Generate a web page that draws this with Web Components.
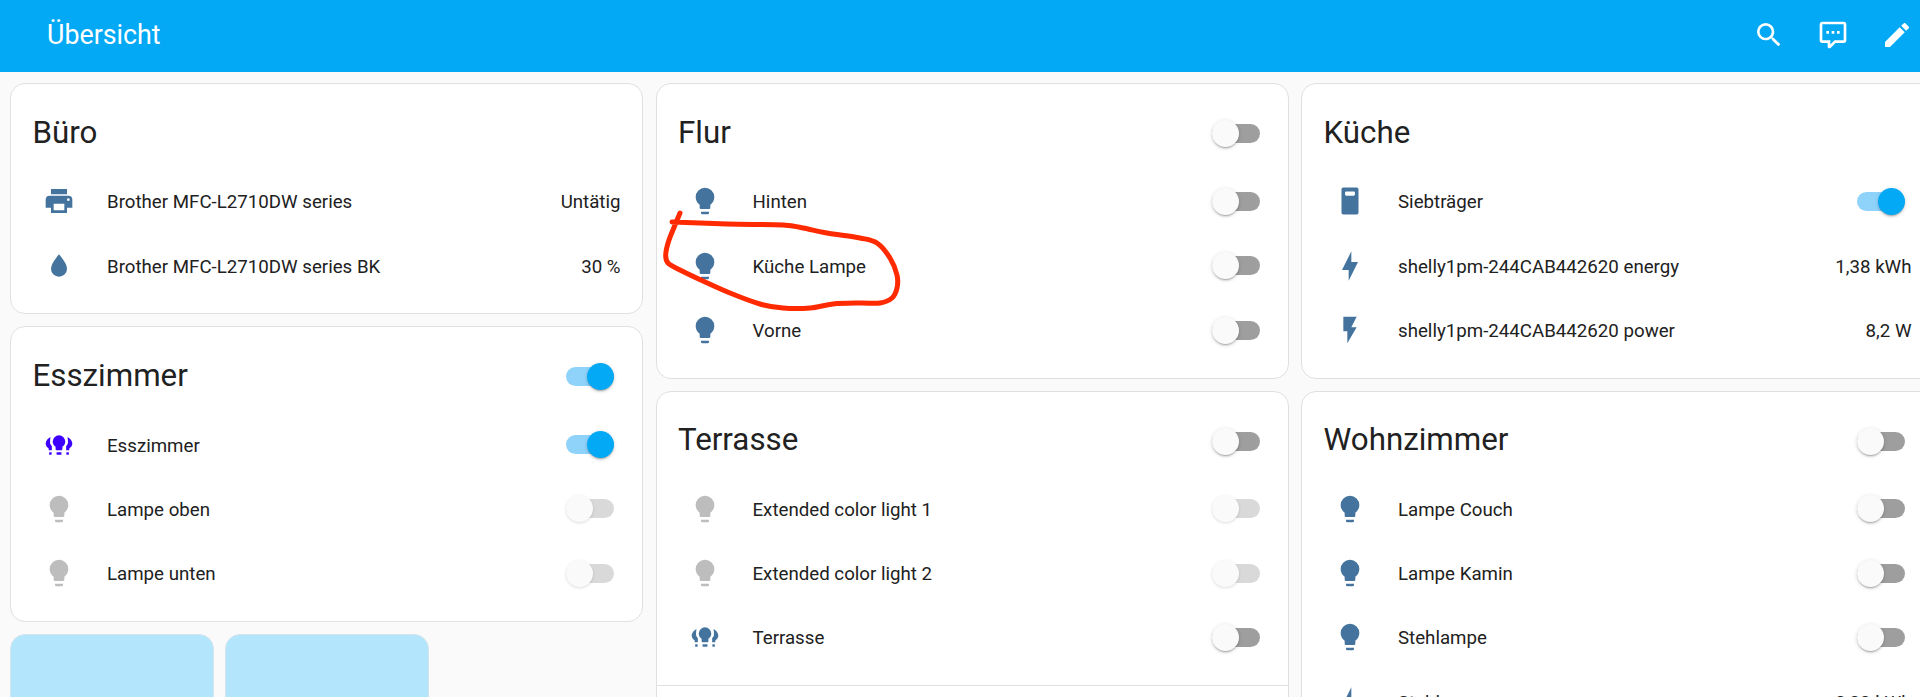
<!DOCTYPE html>
<html lang="de">
<head>
<meta charset="utf-8">
<title>Übersicht</title>
<style>
    html, body { margin: 0; height: 697px; overflow: hidden; background: #fafafa; }
    body { font-family: Roboto, "Liberation Sans", sans-serif; color: #212121; }
</style>
</head>
<body>
<ha-page>
    <ha-toolbar title="Übersicht"></ha-toolbar>
    <ha-column>
        <ha-card title="Büro">
            <ha-row icon="printer" name="Brother MFC-L2710DW series" value="Untätig"></ha-row>
            <ha-row icon="water" name="Brother MFC-L2710DW series BK" value="30 %"></ha-row>
        </ha-card>
        <ha-card title="Esszimmer" toggle="on">
            <ha-row icon="group" color="#3d00ff" name="Esszimmer" toggle="on"></ha-row>
            <ha-row icon="bulb" color="#bdbdbd" name="Lampe oben" toggle="disabled"></ha-row>
            <ha-row icon="bulb" color="#bdbdbd" name="Lampe unten" toggle="disabled"></ha-row>
        </ha-card>
        <ha-tiles>
            <ha-tile></ha-tile>
            <ha-tile></ha-tile>
        </ha-tiles>
    </ha-column>
    <ha-column>
        <ha-card title="Flur" toggle="off">
            <ha-row icon="bulb" name="Hinten" toggle="off"></ha-row>
            <ha-row icon="bulb" name="Küche Lampe" toggle="off"></ha-row>
            <ha-row icon="bulb" name="Vorne" toggle="off"></ha-row>
        </ha-card>
        <ha-card title="Terrasse" toggle="off" footer>
            <ha-row icon="bulb" color="#bdbdbd" name="Extended color light 1" toggle="disabled"></ha-row>
            <ha-row icon="bulb" color="#bdbdbd" name="Extended color light 2" toggle="disabled"></ha-row>
            <ha-row icon="group" name="Terrasse" toggle="off"></ha-row>
        </ha-card>
    </ha-column>
    <ha-column>
        <ha-card title="Küche">
            <ha-row icon="socket" name="Siebträger" toggle="on"></ha-row>
            <ha-row icon="bolt" name="shelly1pm-244CAB442620 energy" value="1,38 kWh"></ha-row>
            <ha-row icon="flash" name="shelly1pm-244CAB442620 power" value="8,2 W"></ha-row>
        </ha-card>
        <ha-card title="Wohnzimmer" toggle="off">
            <ha-row icon="bulb" name="Lampe Couch" toggle="off"></ha-row>
            <ha-row icon="bulb" name="Lampe Kamin" toggle="off"></ha-row>
            <ha-row icon="bulb" name="Stehlampe" toggle="off"></ha-row>
            <ha-row icon="bolt" name="Stehlampe" value="0,00 kWh"></ha-row>
        </ha-card>
    </ha-column>
    <ink-mark></ink-mark>
</ha-page>
<script>
const ICONS = {
    search: 'M9.5,3A6.5,6.5 0 0,1 16,9.5C16,11.11 15.41,12.59 14.44,13.73L14.71,14H15.5L20.5,19L19,20.5L14,15.5V14.71L13.73,14.44C12.59,15.41 11.11,16 9.5,16A6.5,6.5 0 0,1 3,9.5A6.5,6.5 0 0,1 9.5,3M9.5,5C7,5 5,7 5,9.5C5,12 7,14 9.5,14C12,14 14,12 14,9.5C14,7 12,5 9.5,5Z',
    comment: 'M9,22A1,1 0 0,1 8,21V18H4A2,2 0 0,1 2,16V4C2,2.89 2.9,2 4,2H20A2,2 0 0,1 22,4V16A2,2 0 0,1 20,18H13.9L10.2,21.71C10,21.9 9.75,22 9.5,22V22H9M10,16V19.08L13.08,16H20V4H4V16H10M17,11H15V9H17V11M13,11H11V9H13V11M9,11H7V9H9V11Z',
    pencil: 'M20.71,7.04C21.1,6.65 21.1,6 20.71,5.63L18.37,3.29C18,2.9 17.35,2.9 16.96,3.29L15.12,5.12L18.87,8.87M3,17.25V21H6.75L17.81,9.93L14.06,6.18L3,17.25Z',
    bulb: 'M12,2A7,7 0 0,0 5,9C5,11.38 6.19,13.47 8,14.74V17A1,1 0 0,0 9,18H15A1,1 0 0,0 16,17V14.74C17.81,13.47 19,11.38 19,9A7,7 0 0,0 12,2M9,21A1,1 0 0,0 10,22H14A1,1 0 0,0 15,21V20H9V21Z',
    printer: 'M18,3H6V7H18M19,12A1,1 0 0,1 18,11A1,1 0 0,1 19,10A1,1 0 0,1 20,11A1,1 0 0,1 19,12M16,19H8V14H16M19,8H5A3,3 0 0,0 2,11V17H6V21H18V17H22V11A3,3 0 0,0 19,8Z',
    water: 'M12,20A6,6 0 0,1 6,14C6,10 12,3.25 12,3.25C12,3.25 18,10 18,14A6,6 0 0,1 12,20Z',
    flash: 'M7,2V13H10V22L17,10H13L17,2H7Z',
    bolt: 'M11 15H6L13 1V9H18L11 23V15Z',
    socket: 'M6 0H18A1.6 1.6 0 0 1 19.6 1.6V22.4A1.6 1.6 0 0 1 18 24H6A1.6 1.6 0 0 1 4.4 22.4V1.6A1.6 1.6 0 0 1 6 0ZM8.6 3.4A1 1 0 0 0 7.6 4.4V6.2A1 1 0 0 0 8.6 7.2H15.4A1 1 0 0 0 16.4 6.2V4.4A1 1 0 0 0 15.4 3.4Z',
    group: 'M12 4A5.2 5.2 0 0 0 6.8 9.2C6.8 11 7.7 12.5 9.2 13.5V15.5A.8.8 0 0 0 10 16.3H14A.8.8 0 0 0 14.8 15.5V13.5C16.3 12.5 17.2 11 17.2 9.2A5.2 5.2 0 0 0 12 4ZM10 18H14V20H10ZM5 5.3C2.8 6.4 1 8.5 1 10.8C1 12.6 2.2 14 3.5 14.9V16.4H6.1V12.8C5.1 12.1 4.6 11 4.6 9.8C4.6 8.2 4.7 6.9 5 5.3ZM3.9 18H5.9V20H3.9ZM19 5.3C21.2 6.4 23 8.5 23 10.8C23 12.6 21.8 14 20.5 14.9V16.4H17.9V12.8C18.9 12.1 19.4 11 19.4 9.8C19.4 8.2 19.3 6.9 19 5.3ZM18.1 18H20.1V20H18.1Z'
};

// the two hand made icons are drawn on a bigger grid than the 24 unit ones
const VIEW_BOXES = { group: '-1.2 -1.2 26.4 26.4', socket: '-2.3 -2.3 28.6 28.6' };

/** Small helper for the elements that only fill their shadow root once. */
class ShadowElement extends HTMLElement {
    constructor() {
        super();
        this.attachShadow({ mode: 'open' });
    }
}

class HaPage extends ShadowElement {
    connectedCallback() {
        this.shadowRoot.innerHTML = `
            <style>
                :host { display: grid; position: relative; width: 1944px; height: 697px; overflow: hidden;
                    grid-template-columns: repeat(3, 633px); grid-template-rows: 72px 1fr;
                    column-gap: 12.5px; padding: 0 10px; box-sizing: border-box; }
                ::slotted(ha-toolbar) { grid-column: 1 / -1; margin: 0 -10px; }
            </style>
            <slot></slot>
        `;
    }
}

class HaColumn extends ShadowElement {
    connectedCallback() {
        this.shadowRoot.innerHTML = `
            <style>
                :host { display: flex; flex-direction: column; gap: 12px; padding-top: 11.3px; min-width: 0; }
            </style>
            <slot></slot>
        `;
    }
}

class HaIcon extends ShadowElement {
    connectedCallback() {
        const name = this.getAttribute('name');
        this.shadowRoot.innerHTML = `
            <style>
                :host { display: block; width: 32px; height: 32px; flex: none; }
                svg { display: block; width: 100%; height: 100%; fill: currentColor; }
            </style>
            <svg viewBox="${VIEW_BOXES[name] || '0 0 24 24'}"><path d="${ICONS[name]}"/></svg>
        `;
    }
}

class HaToolbar extends ShadowElement {
    connectedCallback() {
        this.shadowRoot.innerHTML = `
            <style>
                :host { display: flex; align-items: center; height: 72px; padding: 0 15px 2px 47px;
                    box-sizing: border-box; background: #03a9f4; color: #fff; }
                h1 { flex: 1; margin: 0; font-size: 26.8px; font-weight: 400; }
                span { display: flex; justify-content: center; width: 64.2px; }
            </style>
            <h1>${this.getAttribute('title')}</h1>
            <span><ha-icon name="search"></ha-icon></span>
            <span><ha-icon name="comment"></ha-icon></span>
            <span><ha-icon name="pencil"></ha-icon></span>
        `;
    }
}

class HaToggle extends ShadowElement {
    connectedCallback() {
        this.shadowRoot.innerHTML = `
            <style>
                :host { display: flex; align-items: center; position: relative; width: 48px; height: 27px; flex: none; }
                .track { width: 100%; height: 19px; border-radius: 10px; background: #9e9e9e; }
                .thumb { position: absolute; top: 0; left: 0; width: 27px; height: 27px; border-radius: 50%;
                    background: #fafafa; box-shadow: 0 2px 2px -1px rgba(0,0,0,.3), 0 1px 4px rgba(0,0,0,.16); }
                :host([state=on]) .track { background: #8fd3fb; }
                :host([state=on]) .thumb { left: auto; right: 0; background: #03a9f4; }
                :host([state=disabled]) .track { background: #d9d9d9; }
                :host([state=disabled]) .thumb { box-shadow: 0 1px 3px rgba(0,0,0,.14); }
            </style>
            <div class="track"></div>
            <div class="thumb"></div>
        `;
    }
}

class HaRow extends ShadowElement {
    connectedCallback() {
        const value = this.getAttribute('value');
        const toggle = this.getAttribute('toggle');
        const color = this.getAttribute('color') || '#44739e';
        const end = toggle ? `<ha-toggle state="${toggle}"></ha-toggle>` : `<span class="value">${value}</span>`;
        this.shadowRoot.innerHTML = `
            <style>
                :host { display: flex; align-items: center; height: 64.3px; font-size: 18.7px; }
                :host([toggle]) { padding-right: 6.5px; }
                .icon { display: flex; justify-content: center; width: 49px; margin-left: 2px; color: ${color}; flex: none; }
                .name { flex: 1; margin-left: 23.5px; padding-top: 2px; white-space: nowrap; }
                .value { padding-top: 2px; white-space: nowrap; }
            </style>
            <div class="icon"><ha-icon name="${this.getAttribute('icon')}"></ha-icon></div>
            <div class="name">${this.getAttribute('name')}</div>
            ${end}
        `;
    }
}

class HaCard extends ShadowElement {
    connectedCallback() {
        const toggle = this.getAttribute('toggle');
        this.shadowRoot.innerHTML = `
            <style>
                :host { display: block; background: #fff; border: 1.5px solid #e0e0e0; border-radius: 15px;
                    box-sizing: border-box; flex: none; }
                header { display: flex; align-items: center; justify-content: space-between;
                    height: 85px; box-sizing: border-box; padding: 14px 28px 0 21.5px; }
                h2 { margin: 0; font-size: 31.3px; font-weight: 400; line-height: 1.2; position: relative; top: -1px; }
                .rows { padding: 0 21.5px 15.5px; }
                .footer { border-top: 1.5px solid #e0e0e0; height: 60px; }
                :host(:not([footer])) .footer { display: none; }
            </style>
            <header>
                <h2>${this.getAttribute('title')}</h2>
                ${toggle ? `<ha-toggle state="${toggle}"></ha-toggle>` : ''}
            </header>
            <div class="rows"><slot></slot></div>
            <div class="footer"></div>
        `;
    }
}

class HaTiles extends ShadowElement {
    connectedCallback() {
        this.shadowRoot.innerHTML = `
            <style>
                :host { display: flex; gap: 11.5px; }
            </style>
            <slot></slot>
        `;
    }
}

class HaTile extends ShadowElement {
    connectedCallback() {
        this.shadowRoot.innerHTML = `
            <style>
                :host { display: block; width: 203.5px; height: 120px; box-sizing: border-box;
                    background: #b3e5fc; border: 1.5px solid #d4e4ec; border-radius: 15px; }
            </style>
        `;
    }
}

/**
 * The red hand drawn circle that lies over the Flur card.
 */
class InkMark extends ShadowElement {
    connectedCallback() {
        const points = [
            [680, 213], [675, 225], [668.5, 241.5], [665.7, 255], [668, 263], [680, 270], [703, 281], [730, 293],
            [760, 304], [783, 308], [810, 308], [833, 304], [860, 303], [880, 303], [892, 298], [897, 288],
            [897, 275], [890, 258], [877, 243], [860, 238], [827, 233], [803, 228], [783, 225], [727, 224], [672, 222]
        ];
        let d = `M${points[0][0]} ${points[0][1]}`;
        for (let i = 0; i < points.length - 1; i++) {
            const p0 = points[Math.max(i - 1, 0)];
            const p1 = points[i];
            const p2 = points[i + 1];
            const p3 = points[Math.min(i + 2, points.length - 1)];
            const c1 = [p1[0] + (p2[0] - p0[0]) / 6, p1[1] + (p2[1] - p0[1]) / 6];
            const c2 = [p2[0] - (p3[0] - p1[0]) / 6, p2[1] - (p3[1] - p1[1]) / 6];
            d += `C${c1[0]} ${c1[1]} ${c2[0]} ${c2[1]} ${p2[0]} ${p2[1]}`;
        }
        this.shadowRoot.innerHTML = `
            <style>
                :host { position: absolute; left: 0; top: 0; width: 1920px; height: 697px; pointer-events: none; }
                svg { display: block; width: 100%; height: 100%; }
                path { fill: none; stroke: #ff2a00; stroke-width: 5; stroke-linecap: round; stroke-linejoin: round; }
            </style>
            <svg viewBox="0 0 1920 697"><path d="${d}"/></svg>
        `;
    }
}

customElements.define('ha-page', HaPage);
customElements.define('ha-column', HaColumn);
customElements.define('ha-icon', HaIcon);
customElements.define('ha-toolbar', HaToolbar);
customElements.define('ha-toggle', HaToggle);
customElements.define('ha-row', HaRow);
customElements.define('ha-card', HaCard);
customElements.define('ha-tiles', HaTiles);
customElements.define('ha-tile', HaTile);
customElements.define('ink-mark', InkMark);
</script>
</body>
</html>
